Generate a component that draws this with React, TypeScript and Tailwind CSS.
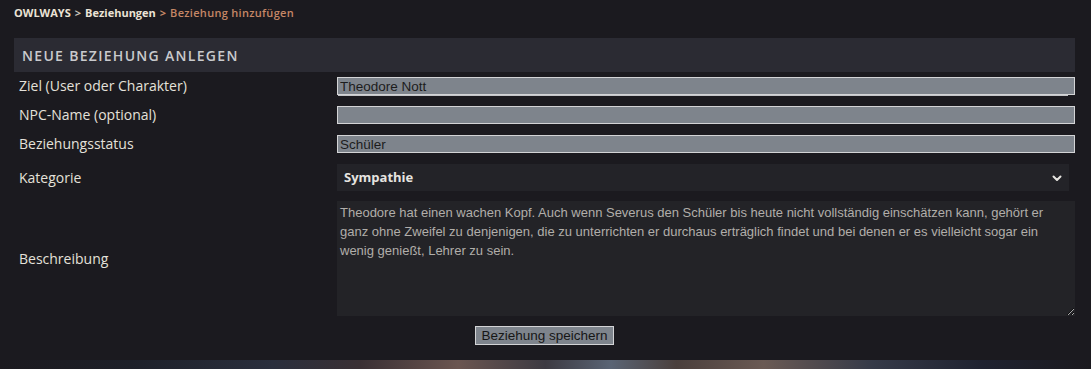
import React from "react";

const labelFont = "font-['Open_Sans','Noto_Sans',sans-serif]";
const inputCls =
    "block h-[18px] w-[738px] border border-[#d3d4d6] bg-[#7e848c] px-[2px] pt-[1px] font-['Liberation_Sans',Arial,sans-serif] text-[13.5px] leading-none text-[#1c1c1c] outline-none";

function Row({ label, children }: { label: string; children: React.ReactNode }) {
    return (
        <div className="grid grid-cols-[323px_1fr] items-center">
            <div className={`pl-[5px] text-[14px] leading-[18px] text-[#e4e1da] ${labelFont}`}>{label}</div>
            <div className="leading-none">{children}</div>
        </div>
    );
}

export default function App() {
    const text =
        "Theodore hat einen wachen Kopf. Auch wenn Severus den Schüler bis heute nicht vollständig einschätzen kann, gehört er ganz ohne Zweifel zu denjenigen, die zu unterrichten er durchaus erträglich findet und bei denen er es vielleicht sogar ein wenig genießt, Lehrer zu sein.";

    return (
        <div className="h-[369px] w-[1091px] overflow-hidden bg-[#1b1a1f]">
            {/* breadcrumb */}
            <div className={`flex h-[26px] items-center gap-[4px] pl-[14px] text-[11px] font-bold ${labelFont}`}>
                <span className="text-[#ebe3d6]">OWLWAYS</span>
                <span className="text-[#c9c2b8]">&gt;</span>
                <span className="text-[#ebe3d6]">Beziehungen</span>
                <span className="text-[#c58766]">&gt;</span>
                <span className="font-semibold tracking-[0.3px] text-[#c58766]">Beziehung hinzufügen</span>
            </div>

            <div className="ml-[14px] mt-[12px] w-[1061px]">
                <div className={`flex h-[34px] items-center bg-[#2b2b33] pl-[8px] text-[14px] font-semibold tracking-[1.3px] text-[#c9cacd] ${labelFont}`}>
                    NEUE BEZIEHUNG ANLEGEN
                </div>

                <div className="flex flex-col gap-[11px] pt-[5px]">
                    <Row label="Ziel (User oder Charakter)">
                        <div className="relative">
                            <input className={inputCls} defaultValue="Theodore Nott" />
                            <span className="absolute left-[1px] top-[18px] h-[1px] w-[730px] bg-[#c4c5c8]" />
                        </div>
                    </Row>
                    <Row label="NPC-Name (optional)">
                        <input className={inputCls} defaultValue="" />
                    </Row>
                    <Row label="Beziehungsstatus">
                        <input className={inputCls} defaultValue="Schüler" />
                    </Row>
                    <Row label="Kategorie">
                        <div className={`flex h-[27px] w-[732px] items-center justify-between bg-[#232328] pl-[7px] pr-[6px] text-[13px] font-bold text-[#e6e4e0] ${labelFont}`}>
                            <span>Sympathie</span>
                            <svg width="12" height="12" viewBox="0 0 12 12" fill="none">
                                <path d="M2.5 4.5 6 8l3.5-3.5" stroke="#e6e4e0" strokeWidth="2" strokeLinecap="round" strokeLinejoin="round" />
                            </svg>
                        </div>
                    </Row>
                    <div className="-mt-[1px]">
                        <Row label="Beschreibung">
                            <textarea
                                className="block h-[115px] w-[738px] bg-[#232327] px-[3px] pt-[2px] font-['Liberation_Sans',Arial,sans-serif] text-[13px] leading-[19px] text-[#b1aeaa] outline-none"
                                defaultValue={text}
                            />
                        </Row>
                    </div>
                </div>

                <div className="mt-[10px] flex justify-center">
                    <button className="block h-[19px] border border-[#d3d4d6] bg-[#7e848c] px-[5px] font-['Liberation_Sans',Arial,sans-serif] text-[13.5px] leading-none text-[#161616]">
                        Beziehung speichern
                    </button>
                </div>
            </div>

            {/* background image strip */}
            <div className="mt-[15px] h-[12px] w-full bg-[linear-gradient(90deg,#1b1a1f_0%,#1d2029_12%,#2a2f3d_25%,#3a3034_33%,#6a5550_42%,#3c3a42_50%,#5a6474_56%,#4a3f3c_62%,#6a5a54_70%,#353a48_80%,#1f2230_90%,#1b1a1f_100%)]" />
        </div>
    );
}
